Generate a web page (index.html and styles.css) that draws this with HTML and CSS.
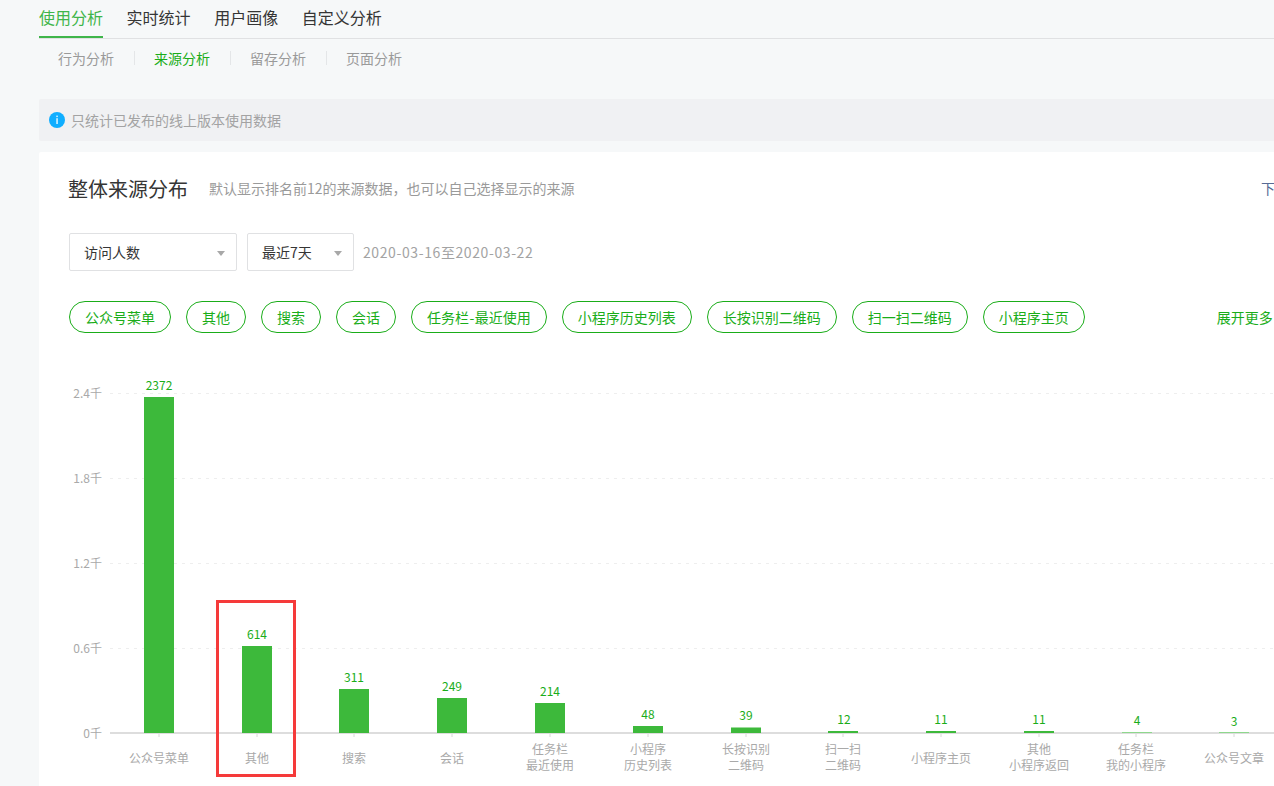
FILE: index.html
```html
<!DOCTYPE html>
<html lang="zh-CN">
  <head>
    <meta charset="utf-8">
    <title>来源分析</title>
    <link rel="stylesheet" href="styles.css">
  </head>
  <body>
    <div class="page">
      <div class="main-tabs">
        <a class="main-tab active">使用分析</a>
        <a class="main-tab">实时统计</a>
        <a class="main-tab">用户画像</a>
        <a class="main-tab">自定义分析</a>
      </div>
      <div class="sub-tabs">
        <a class="sub-tab">行为分析</a>
        <a class="sub-tab active">来源分析</a>
        <a class="sub-tab">留存分析</a>
        <a class="sub-tab">页面分析</a>
      </div>

      <div class="notice">
        <svg class="notice-icon" width="16" height="16" viewBox="0 0 16 16">
          <circle cx="8" cy="8" r="8" fill="#10aeff"/>
          <rect x="7.4" y="3.6" width="1.3" height="1.5" fill="#fff"/>
          <rect x="7.4" y="6.2" width="1.3" height="5.8" fill="#fff"/>
        </svg>
        <span>只统计已发布的线上版本使用数据</span>
      </div>

      <div class="card">
        <div class="card-head">
          <h2 class="card-title">整体来源分布</h2>
          <span class="card-desc">默认显示排名前12的来源数据，也可以自己选择显示的来源</span>
          <a class="download">下载</a>
        </div>

        <div class="filters">
          <div class="select select-metric">访问人数<i class="caret"></i></div>
          <div class="select select-range">最近7天<i class="caret"></i></div>
          <span class="date-range">2020-03-16至2020-03-22</span>
        </div>

        <div class="pills">
          <a class="pill">公众号菜单</a>
          <a class="pill">其他</a>
          <a class="pill">搜索</a>
          <a class="pill">会话</a>
          <a class="pill">任务栏<span class="dash">-</span>最近使用</a>
          <a class="pill">小程序历史列表</a>
          <a class="pill">长按识别二维码</a>
          <a class="pill">扫一扫二维码</a>
          <a class="pill">小程序主页</a>
          <a class="more">展开更多</a>
        </div>

        <svg class="chart" width="1235" height="420" viewBox="39 366 1235 420">
          <g class="grid">
            <line x1="110" x2="1274" y1="393.5" y2="393.5"/>
            <line x1="110" x2="1274" y1="478.5" y2="478.5"/>
            <line x1="110" x2="1274" y1="563.5" y2="563.5"/>
            <line x1="110" x2="1274" y1="648.5" y2="648.5"/>
          </g>
          <g class="y-labels">
            <text x="102" y="398">2.4千</text>
            <text x="102" y="483">1.8千</text>
            <text x="102" y="568">1.2千</text>
            <text x="102" y="653">0.6千</text>
            <text x="102" y="738">0千</text>
          </g>

          <rect class="axis" x="110" y="732" width="1164" height="2"/>

          <g class="bars">
            <rect x="144" y="397" width="30" height="336"/>
            <rect x="242" y="646" width="30" height="87"/>
            <rect x="339" y="689" width="30" height="44"/>
            <rect x="437" y="698" width="30" height="35"/>
            <rect x="535" y="703" width="30" height="30"/>
            <rect x="633" y="726" width="30" height="7"/>
            <rect x="731" y="727.5" width="30" height="5.5"/>
            <rect x="828" y="731" width="30" height="2"/>
            <rect x="926" y="731" width="30" height="2"/>
            <rect x="1024" y="731" width="30" height="2"/>
            <rect class="thin" x="1122" y="732" width="30" height="1"/>
            <rect class="thin" x="1219" y="732" width="30" height="1"/>
          </g>

          <g class="values">
            <text x="159" y="390">2372</text>
            <text x="257" y="639">614</text>
            <text x="354" y="682">311</text>
            <text x="452" y="691">249</text>
            <text x="550" y="696">214</text>
            <text x="648" y="719">48</text>
            <text x="746" y="720">39</text>
            <text x="844" y="724">12</text>
            <text x="941" y="724">11</text>
            <text x="1039" y="724">11</text>
            <text x="1137" y="725">4</text>
            <text x="1234" y="726">3</text>
          </g>

          <g class="ticks">
            <line x1="159" x2="159" y1="734" y2="737"/>
            <line x1="257" x2="257" y1="734" y2="737"/>
            <line x1="354" x2="354" y1="734" y2="737"/>
            <line x1="452" x2="452" y1="734" y2="737"/>
            <line x1="550" x2="550" y1="734" y2="737"/>
            <line x1="648" x2="648" y1="734" y2="737"/>
            <line x1="746" x2="746" y1="734" y2="737"/>
            <line x1="843" x2="843" y1="734" y2="737"/>
            <line x1="941" x2="941" y1="734" y2="737"/>
            <line x1="1039" x2="1039" y1="734" y2="737"/>
            <line x1="1136" x2="1136" y1="734" y2="737"/>
            <line x1="1234" x2="1234" y1="734" y2="737"/>
          </g>

          <g class="x-labels">
            <text x="159" y="763">公众号菜单</text>
            <text x="257" y="763">其他</text>
            <text x="354" y="763">搜索</text>
            <text x="452" y="763">会话</text>
            <text x="550" y="754">任务栏</text>
            <text x="550" y="770">最近使用</text>
            <text x="648" y="754">小程序</text>
            <text x="648" y="770">历史列表</text>
            <text x="746" y="754">长按识别</text>
            <text x="746" y="770">二维码</text>
            <text x="843" y="754">扫一扫</text>
            <text x="843" y="770">二维码</text>
            <text x="941" y="763">小程序主页</text>
            <text x="1039" y="754">其他</text>
            <text x="1039" y="770">小程序返回</text>
            <text x="1136" y="754">任务栏</text>
            <text x="1136" y="770">我的小程序</text>
            <text x="1234" y="763">公众号文章</text>
          </g>
        </svg>
      </div>

      <div class="mark"></div>
    </div>
  </body>
</html>
```

FILE: styles.css
```css
html, body{
  margin: 0;
  height: 786px;
  overflow: hidden;
}
body{
  background: #f6f8f9;
  color: #353535;
  font-family: "Noto Sans CJK SC", "Liberation Sans", sans-serif;
  font-size: 14px;
}
.page{
  position: relative;
  width: 1400px;
  padding-left: 39px;
  box-sizing: border-box;
}

.main-tabs{
  display: flex;
  gap: 23.6px;
  height: 38px;
  border-bottom: 1px solid #e0e1e3;
}
.main-tab{
  height: 38px;
  line-height: 35px;
  font-size: 16px;
  color: #353535;
  box-sizing: border-box;
}
.main-tab.active{
  color: #3fb54a;
  border-bottom: 2px solid #3fb54a;
}

.sub-tabs{
  display: flex;
  height: 14px;
  margin-top: 12px;
}
.sub-tab{
  padding: 0 20px 0 19px;
  line-height: 14px;
  color: #9a9a9a;
  border-left: 1px solid #e4e6e8;
}
.sub-tab:first-child{
  border-left: 0;
}
.sub-tab.active{
  color: #1aad19;
}

.notice{
  display: flex;
  align-items: center;
  gap: 6px;
  height: 42px;
  margin-top: 34px;
  padding-left: 10px;
  background: #f0f1f3;
  border-radius: 2px;
  color: #a3a3a3;
}

.card{
  margin-top: 11px;
  height: 700px;
  padding: 0 0 0 30px;
  background: #fff;
  border-radius: 2px;
}
.card-head{
  display: flex;
  align-items: center;
  height: 72px;
}
.card-title{
  margin: 0 0 0 -1px;
  font-size: 20px;
  font-weight: normal;
  color: #353535;
}
.card-desc{
  margin-left: 21px;
  color: #9a9a9a;
}
.download{
  position: absolute;
  left: 1261px;
  top: 180px;
  line-height: 16px;
  color: #576b95;
}

.filters{
  display: flex;
  align-items: center;
  height: 38px;
  margin-top: 9px;
}
.select{
  position: relative;
  height: 38px;
  line-height: 36px;
  padding-left: 14px;
  background: #fff;
  border: 1px solid #e0e1e3;
  border-radius: 2px;
  box-sizing: border-box;
}
.select-metric{
  width: 168px;
}
.select-range{
  width: 107px;
  margin-left: 10px;
}
.caret{
  position: absolute;
  right: 11px;
  top: 17px;
  border-style: solid;
  border-width: 5px 4px 0 4px;
  border-color: #a8a8a8 transparent transparent transparent;
}
.date-range{
  margin-left: 9px;
  color: #a3a3a3;
  letter-spacing: 0.6px;
}

.pills{
  display: flex;
  align-items: flex-start;
  gap: 15px;
  height: 33px;
  margin-top: 30px;
}
.pill{
  height: 32px;
  line-height: 30px;
  padding: 0 15px;
  color: #1aad19;
  border: 1px solid #1aad19;
  border-radius: 16px;
  box-sizing: border-box;
  white-space: nowrap;
}
.dash{
  margin: 0 0.5px;
}
.more{
  margin-left: 117px;
  line-height: 32px;
  color: #1aad19;
  white-space: nowrap;
}

.chart{
  display: block;
  margin: 32px 0 0 -30px;
}
.chart text{
  font-size: 12px;
}
.grid line{
  stroke: #eeeeee;
  stroke-width: 1;
  stroke-dasharray: 3 5;
}
.y-labels text{
  fill: #a9a9a9;
  text-anchor: end;
}
.bars rect{
  fill: #3db93b;
}
.bars rect.thin{
  fill: #8ed88d;
}
.values text{
  fill: #1aad19;
  text-anchor: middle;
}
.axis{
  fill: #dddddd;
}
.ticks line{
  stroke: #d8d8d8;
  stroke-width: 1;
}
.x-labels text{
  fill: #a9a9a9;
  text-anchor: middle;
}

.mark{
  position: absolute;
  left: 216px;
  top: 600px;
  width: 80px;
  height: 177px;
  border: 3px solid #f53a3a;
  box-sizing: border-box;
}
```
